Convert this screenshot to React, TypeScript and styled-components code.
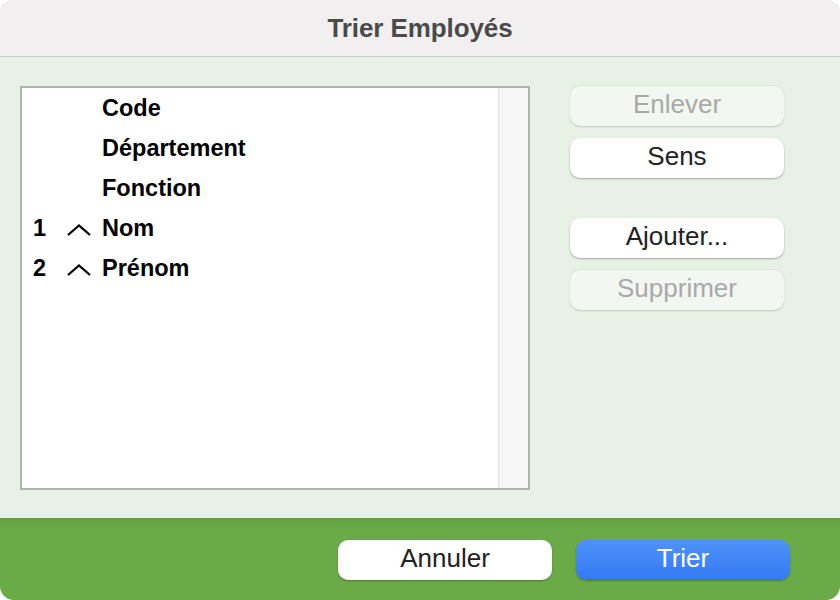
import { createGlobalStyle, styled } from "styled-components";

const GlobalStyle = createGlobalStyle`
  html, body {
    margin: 0;
    padding: 0;
    background: #ffffff;
  }
  body {
    font-family: "Liberation Sans", Arial, sans-serif;
  }
`;

const Window = styled.div`
  width: 840px;
  height: 600px;
  display: flex;
  flex-direction: column;
  border-radius: 12px 12px 14px 14px;
  overflow: hidden;
  background-color: #e7f1e6;
`;

const TitleBar = styled.div`
  height: 56px;
  flex: none;
  display: flex;
  align-items: center;
  justify-content: center;
  background-color: #f1efef;
  border-bottom: 1px solid #c6cdc4;
`;

const Title = styled.h1`
  margin: 0;
  color: #4a4a4a;
  font-size: 26px;
  font-weight: 700;
  letter-spacing: -0.1px;
`;

const Content = styled.div`
  flex: 1;
  display: flex;
  gap: 40px;
  padding: 29px 0 28px 20px;
`;

const ListBox = styled.div`
  width: 510px;
  height: 404px;
  box-sizing: border-box;
  border: 2px solid #aeb5ad;
  background-color: #ffffff;
  display: flex;
`;

const Rows = styled.div`
  flex: 1;
  display: flex;
  flex-direction: column;
`;

const ScrollTrack = styled.div`
  width: 29px;
  background-color: #f7f7f7;
  border-left: 1px solid #e2e2e2;
`;

const Row = styled.div`
  height: 40px;
  display: flex;
  align-items: center;
  color: #000;
  font-size: 23.5px;
  font-weight: 700;
`;

const Num = styled.span`
  width: 34px;
  padding-left: 11px;
`;

const Arrow = styled.span`
  width: 35px;
  display: flex;
  align-items: center;
  padding-top: 3px;
`;

const Side = styled.div`
  width: 214px;
  display: flex;
  flex-direction: column;
  gap: 12px;
`;

const Spacer = styled.div`
  height: 16px;
`;

const Button = styled.button<{ $disabled?: boolean; $primary?: boolean }>`
  height: 40px;
  width: 214px;
  border: none;
  border-radius: 10px;
  font-family: "Liberation Sans", Arial, sans-serif;
  font-size: 26px;
  line-height: 1;
  padding: 0 0 4px;
  color: ${(p) => (p.$disabled ? "#a9a9a9" : p.$primary ? "#ffffff" : "#222222")};
  background: ${(p) =>
    p.$disabled
      ? "#f2f7f1"
      : p.$primary
      ? "linear-gradient(#4e92f8, #3579f6)"
      : "#ffffff"};
  box-shadow: ${(p) =>
    p.$disabled
      ? "0 0.5px 1.5px rgba(0, 0, 0, 0.18)"
      : "0 1px 2px rgba(0, 0, 0, 0.3)"};
`;

const Footer = styled.div`
  height: 82px;
  flex: none;
  box-sizing: border-box;
  display: flex;
  justify-content: flex-end;
  align-items: flex-start;
  gap: 24px;
  padding: 22px 50px 0 0;
  background: linear-gradient(#63a242, #6aab47 16px);
`;

const Chevron = () => (
  <svg width="24" height="12" viewBox="0 0 24 12">
    <polyline
      points="1,11 12,1.5 23,11"
      fill="none"
      stroke="#000"
      strokeWidth="2.3"
    />
  </svg>
);

const fields = [
  { label: "Code" },
  { label: "Département" },
  { label: "Fonction" },
  { label: "Nom", order: 1 },
  { label: "Prénom", order: 2 },
];

export default function App() {
  return (
    <>
      <GlobalStyle />
      <Window>
        <TitleBar>
          <Title>Trier Employés</Title>
        </TitleBar>
        <Content>
          <ListBox>
            <Rows>
              {fields.map((f) => (
                <Row key={f.label}>
                  <Num>{f.order ?? ""}</Num>
                  <Arrow>{f.order ? <Chevron /> : null}</Arrow>
                  {f.label}
                </Row>
              ))}
            </Rows>
            <ScrollTrack />
          </ListBox>
          <Side>
            <Button $disabled>Enlever</Button>
            <Button>Sens</Button>
            <Spacer />
            <Button>Ajouter...</Button>
            <Button $disabled>Supprimer</Button>
          </Side>
        </Content>
        <Footer>
          <Button>Annuler</Button>
          <Button $primary>Trier</Button>
        </Footer>
      </Window>
    </>
  );
}
